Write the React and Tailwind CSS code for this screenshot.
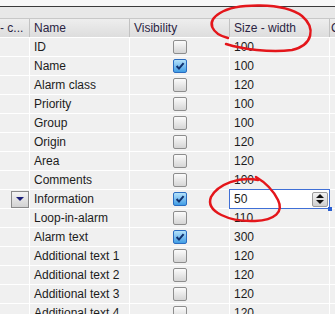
import React from "react";

// rows of the alarm column settings table
const rows = [
  { name: "ID", size: "100", on: false },
  { name: "Name", size: "100", on: true },
  { name: "Alarm class", size: "120", on: false },
  { name: "Priority", size: "100", on: false },
  { name: "Group", size: "100", on: false },
  { name: "Origin", size: "120", on: false },
  { name: "Area", size: "120", on: false },
  { name: "Comments", size: "100", on: false },
  { name: "Information", size: "50", on: true, edit: true },
  { name: "Loop-in-alarm", size: "110", on: false },
  { name: "Alarm text", size: "300", on: true },
  { name: "Additional text 1", size: "120", on: false },
  { name: "Additional text 2", size: "120", on: false },
  { name: "Additional text 3", size: "120", on: false },
  { name: "Additional text 4", size: "120", on: false },
];

function Check({ on }) {
  if (on) {
    return (
      <div className="w-[14px] h-[14px] rounded-[2px] border border-[#2a6cc0] bg-linear-to-b from-[#b4e2fa] to-[#3f9de4] flex items-center justify-center">
        <svg width="10" height="10" viewBox="0 0 10 10">
          <path d="M1.6 5 L4 7.6 L8.6 2.2" fill="none" stroke="#10306e" strokeWidth="2" />
        </svg>
      </div>
    );
  }
  return (
    <div className="w-[14px] h-[14px] rounded-[2px] border border-[#8d8d8d] bg-linear-to-b from-[#fbfbfb] to-[#d5d5d5]" />
  );
}

function DropButton() {
  return (
    <div className="w-[18px] h-[17px] border border-[#8a8a8a] bg-linear-to-b from-[#f4f4f4] to-[#d2d2d2] flex items-center justify-center">
      <svg width="8" height="4" viewBox="0 0 8 4">
        <path d="M0 0 H8 L4 4 Z" fill="#1b1f7a" />
      </svg>
    </div>
  );
}

function Spinner() {
  return (
    <div className="w-[16px] h-[15px] mr-px rounded-[2px] border border-[#9a9a9a] bg-linear-to-b from-[#f2f2f2] to-[#cfcfcf] flex flex-col items-center justify-center gap-[2px]">
      <svg width="8" height="4" viewBox="0 0 8 4">
        <path d="M0 4 H8 L4 0 Z" fill="#111" />
      </svg>
      <svg width="8" height="4" viewBox="0 0 8 4">
        <path d="M0 0 H8 L4 4 Z" fill="#111" />
      </svg>
    </div>
  );
}

function Row({ row }) {
  return (
    <div className="flex h-[19px] shrink-0 border-t border-white">
      <div className="w-[30px] border-r border-white flex items-center justify-end">
        {row.edit && <DropButton />}
      </div>
      <div className="w-[100px] border-r border-white pl-[4px] flex items-center whitespace-nowrap">
        {row.name}
      </div>
      <div className="w-[100px] border-r border-white flex items-center justify-center">
        <Check on={row.on} />
      </div>
      <div className="w-[100px] border-r border-white pl-[4px] flex items-center relative">
        {row.edit ? (
          <div className="absolute left-[-1px] top-[-1px] w-[101px] h-[20px] z-10 bg-white border border-[#3f6fd6] pl-[4px] flex items-center">
            <span className="flex-1">{row.size}</span>
            <Spinner />
            <div className="absolute right-[-3px] bottom-[-3px] w-[4px] h-[4px] bg-[#2a5fd0]" />
          </div>
        ) : (
          row.size
        )}
      </div>
      <div className="flex-1" />
    </div>
  );
}

export default function App() {
  return (
    <div
      className="w-[335px] h-[314px] overflow-hidden relative bg-[#f0f0f0] text-[12px] text-[#1c1c1c] flex flex-col"
      style={{ fontFamily: '"Liberation Sans", Arial, sans-serif' }}
    >
      <div className="h-[6px] shrink-0 bg-[#f7f7f7]" />
      <div className="h-px shrink-0 bg-[#3a3a3a]" />
      <div className="h-[11px] shrink-0 bg-[#e8e8e8]" />

      {/* header */}
      <div className="flex h-[19px] shrink-0 border-t border-[#c8c8c8] bg-linear-to-b from-[#eeeeee] to-[#dddddd] text-[#2b2443]">
        <div className="w-[30px] border-r border-[#c2c2c2] overflow-hidden flex items-center whitespace-nowrap">
          - c...
        </div>
        <div className="w-[100px] border-r border-[#c2c2c2] pl-[4px] flex items-center">Name</div>
        <div className="w-[100px] border-r border-[#c2c2c2] pl-[4px] flex items-center">Visibility</div>
        <div className="w-[100px] border-r border-[#c2c2c2] pl-[4px] flex items-center whitespace-nowrap">
          Size - width
        </div>
        <div className="flex-1 pl-[1px] flex items-center overflow-hidden">C</div>
      </div>

      {rows.map((r) => (
        <Row key={r.name} row={r} />
      ))}

      {/* red hand-drawn marks */}
      <svg className="absolute left-0 top-0 pointer-events-none z-20" width="335" height="314">
        <path
          d="M228 38 C212 34, 205 22, 220 13 C236 3, 284 2, 302 16 C316 28, 313 45, 292 50 C270 53, 242 49, 226 44"
          fill="none"
          stroke="#e4161b"
          strokeWidth="2.5"
          strokeLinecap="round"
        />
        <path
          d="M258 180 C240 176, 218 184, 211 197 C205 212, 230 222, 255 221 C275 220, 284 212, 278 200 C274 192, 268 184, 256 177"
          fill="none"
          stroke="#e4161b"
          strokeWidth="2.5"
          strokeLinecap="round"
        />
      </svg>
    </div>
  );
}
